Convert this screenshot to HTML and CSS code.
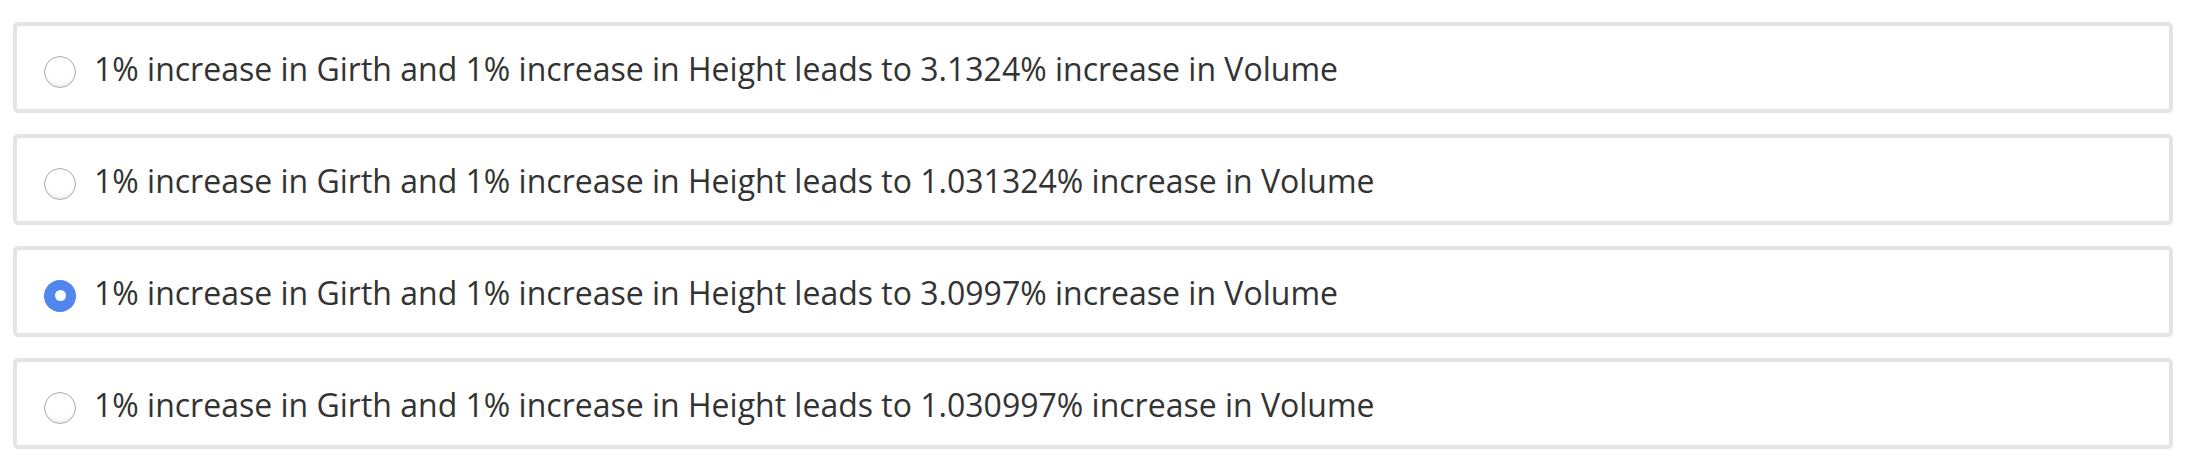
FILE: index.html
```html
<!DOCTYPE html>
<html>
<head>
<meta charset="utf-8">
<link rel="stylesheet" href="styles.css">
</head>
<body>
<div class="options">
  <label class="option">
    <span class="radio"></span>
    <span class="text">1% increase in Girth and 1% increase in Height leads to 3.1324% increase in Volume</span>
  </label>
  <label class="option">
    <span class="radio"></span>
    <span class="text">1% increase in Girth and 1% increase in Height leads to 1.031324% increase in Volume</span>
  </label>
  <label class="option">
    <span class="radio checked"></span>
    <span class="text">1% increase in Girth and 1% increase in Height leads to 3.0997% increase in Volume</span>
  </label>
  <label class="option">
    <span class="radio"></span>
    <span class="text">1% increase in Girth and 1% increase in Height leads to 1.030997% increase in Volume</span>
  </label>
</div>
</body>
</html>
```

FILE: styles.css
```css
html, body {
  margin: 0;
  background: #ffffff;
}
body {
  font-family: "Open Sans", "Liberation Sans", sans-serif;
  color: #333333;
}
.options {
  display: flex;
  flex-direction: column;
  gap: 21px;
  padding: 22px 37px 0 13px;
}
.option {
  box-sizing: border-box;
  height: 91px;
  border: 4px solid #e4e4e4;
  border-radius: 5px;
  display: flex;
  align-items: center;
  padding: 0 0 0 27px;
  background: #fff;
}
.radio {
  box-sizing: border-box;
  flex: none;
  width: 32px;
  height: 32px;
  border-radius: 50%;
  border: 1.5px solid #acacac;
  box-shadow: inset 0 -2px 3px rgba(0,0,0,0.07);
  background: #fff;
  margin-top: 8px;
  display: flex;
  align-items: center;
  justify-content: center;
}
.radio.checked {
  border: none;
  background: #5086ee;
  box-shadow: none;
}
.radio.checked::after {
  content: "";
  width: 11px;
  height: 11px;
  border-radius: 50%;
  background: #fff;
}
.text {
  margin-left: 18px;
  font-size: 32px;
  line-height: 44px;
  margin-top: 2px;
}
```
